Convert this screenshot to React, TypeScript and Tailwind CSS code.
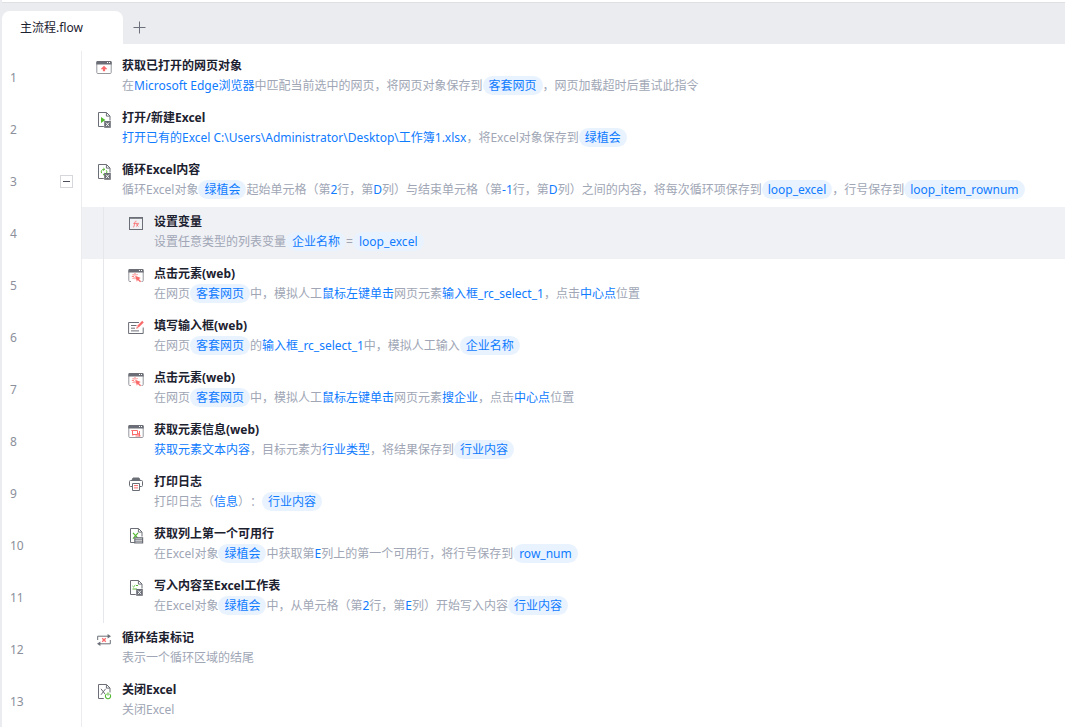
import type { ReactNode } from "react";

type Part = { k: "t" | "v" | "p"; s: string };
const t = (s: string): Part => ({ k: "t", s });
const v = (s: string): Part => ({ k: "v", s });
const p = (s: string): Part => ({ k: "p", s });

const GRAY = "#6b6e76";
const LIGHT = "#96989e";
const RED = "#fa6a6a";
const GREEN = "#52b832";

function Icon({ children }: { children: ReactNode }) {
  return (
    <svg viewBox="0 0 16 16" className="size-4 shrink-0" fill="none" stroke={GRAY} aria-hidden="true">
      {children}
    </svg>
  );
}

function TitleBar() {
  return (
    <>
      <path d="M0.3 4.6V2.2A1.2 1.2 0 0 1 1.5 1h13a1.2 1.2 0 0 1 1.2 1.2v2.4z" fill={GRAY} stroke="none" />
      <path d="M11 2h1v1h-1zM13 2h1v1h-1z" fill="#fff" stroke="none" />
    </>
  );
}

function Frame() {
  return (
    <>
      <rect x="0.8" y="1.5" width="14.4" height="12" rx="1" stroke={LIGHT} />
      <TitleBar />
    </>
  );
}

function Sheet() {
  return <path d="M7.8 14.5H2.5V0.5h8l3.5 3.5v4.5M10.4 0.7v3.4h3.4" />;
}

function Badge() {
  return (
    <>
      <rect x="8.2" y="9" width="6.6" height="6.8" fill={GRAY} stroke="none" />
      <path d="M10 10.6l3 3.6M13 10.6l-3 3.6" stroke="#fff" strokeWidth="0.9" />
    </>
  );
}

const icons = {
  page: (
    <Icon>
      <Frame />
      <path d="M8 5.8l3 2.9v.5H9.1v2H6.9v-2H5v-.5z" fill={RED} stroke="none" />
    </Icon>
  ),
  open: (
    <Icon>
      <Sheet />
      <path d="M5 5l4.4 3L5 11z" fill={GREEN} stroke="none" />
      <Badge />
    </Icon>
  ),
  loop: (
    <Icon>
      <Sheet />
      <path d="M5.6 9.2a2.6 2.6 0 0 1 2.6-3.9M10.3 6.3a2.6 2.6 0 0 1-2.4 4.2M7.3 4l1.5 1.3-1.5 1.3M8.6 9.2l-1.4 1.3 1.4 1.2" stroke={GREEN} />
      <Badge />
    </Icon>
  ),
  fx: (
    <Icon>
      <rect x="1.5" y="1.5" width="13" height="12" />
      <path d="M1 1h14v1.8H1z" fill={GRAY} stroke="none" />
      <path d="M8.5 5.2c-1-.3-1.5.4-1.7 1.4l-.7 3.4c-.2.8-.5 1.2-1.2 1M5.3 7.4h5.4M8.2 7.6c1 0 1.1 2.9 2.2 2.9M10.8 7.6c-1 0-1.6 2.9-2.8 2.9" stroke={RED} strokeWidth="0.8" />
    </Icon>
  ),
  click: (
    <Icon>
      <path d="M3 13.5H1.8a1 1 0 0 1-1-1V3.5M15.2 3.5v9a1 1 0 0 1-1 1h-.7" stroke={LIGHT} />
      <TitleBar />
      <path d="M7 5v2.2M3.8 8.4h2.2M4.6 6l1.6 1.6M9.5 6L8.2 7.4M4.6 11l1.5-1.6M7 9.6v1.6" stroke={RED} strokeWidth="0.9" />
      <path d="M7.2 7.8l5.6 2.2-1.9 1 2.2 2.3-1 1-2.3-2.2-.9 1.7z" fill={RED} stroke="none" />
    </Icon>
  ),
  input: (
    <Icon>
      <path d="M11 2.5H.6v11h14.6V7.5M3 5.5h5.5M3 8.2h4M3 10.9h8" />
      <path d="M15 1.6L9.8 6.8" stroke={RED} strokeWidth="2.2" />
      <path d="M8.2 8.8l.6-2.4 1.8 1.7z" fill={RED} stroke="none" />
    </Icon>
  ),
  info: (
    <Icon>
      <Frame />
      <path d="M4.5 6.5h5v4h-5zM11.5 7v5H7.5" stroke={RED} />
      <path d="M3.3 5.9h1.4v1.2H3.3zM9.5 9.2h1.6v1.6H9.5zM10.8 11h1.6v1.4h-1.6zM4 10.2h1.4v1.3H4z" fill={RED} stroke="none" />
    </Icon>
  ),
  print: (
    <Icon>
      <path d="M4 4.2L5 2h6l1 2.2z" fill={GRAY} />
      <path d="M4 10.5H2.5a1 1 0 0 1-1-1v-4a1 1 0 0 1 1-1h11a1 1 0 0 1 1 1v4a1 1 0 0 1-1 1H12" />
      <path d="M4.5 7.5h7v7h-7z" fill="#fff" />
      <path d="M6 9.6h4M6 11.9h4" stroke={RED} />
    </Icon>
  ),
  row: (
    <Icon>
      <Sheet />
      <path d="M5 4.8l4.6 5M10 4.8L5 10.6" stroke={GREEN} strokeWidth="1.2" />
      <path d="M6.2 9.2h9v6.3h-9z" fill={GRAY} stroke="none" />
      <path d="M7.4 10.8h6.6M7.4 12.4h6.6M7.4 14h6.6" stroke="#fff" strokeWidth="0.7" />
    </Icon>
  ),
  write: (
    <Icon>
      <Sheet />
      <path d="M4.5 6l1 .9 1.8-1.7M8 5.5h2M4.5 9h4.5" stroke={GREEN} />
      <Badge />
    </Icon>
  ),
  end: (
    <Icon>
      <path d="M1.7 8V4.2h11M14.3 8v3.8h-11" />
      <path d="M11.6 2L15 4.2l-3.4 2.2zM4.4 9.6L1 11.8 4.4 14z" fill={GRAY} stroke="none" />
      <path d="M6.2 6.2l3.6 3.6M9.8 6.2L6.2 9.8" stroke={RED} strokeWidth="1.3" />
    </Icon>
  ),
  close: (
    <Icon>
      <Sheet />
      <path d="M5 4.8l4.6 6M9.6 4.8L5 10.8" />
      <circle cx="12" cy="12" r="3.6" fill="#fff" stroke="none" />
      <path d="M10.6 9.9a2.6 2.6 0 1 0 2.8 0M12 8.6v3" stroke={GREEN} strokeWidth="1.1" />
    </Icon>
  ),
};

type Step = { icon: keyof typeof icons; title: string; parts: Part[]; nested?: boolean; selected?: boolean; open?: boolean };

const steps: Step[] = [
  { icon: "page", title: "获取已打开的网页对象", parts: [t("在"), v("Microsoft Edge浏览器"), t("中匹配当前选中的网页，将网页对象保存到"), p("客套网页"), t("，网页加载超时后重试此指令")] },
  { icon: "open", title: "打开/新建Excel", parts: [v("打开已有的Excel C:\\Users\\Administrator\\Desktop\\工作簿1.xlsx"), t("，将Excel对象保存到"), p("绿植会")] },
  { icon: "loop", title: "循环Excel内容", open: true, parts: [t("循环Excel对象"), p("绿植会"), t("起始单元格（第"), v("2"), t("行，第"), v("D"), t("列）与结束单元格（第"), v("-1"), t("行，第"), v("D"), t("列）之间的内容，将每次循环项保存到"), p("loop_excel"), t("，行号保存到"), p("loop_item_rownum")] },
  { icon: "fx", title: "设置变量", nested: true, selected: true, parts: [t("设置任意类型的列表变量"), p("企业名称"), t("="), p("loop_excel")] },
  { icon: "click", title: "点击元素(web)", nested: true, parts: [t("在网页"), p("客套网页"), t("中，模拟人工"), v("鼠标左键单击"), t("网页元素"), v("输入框_rc_select_1"), t("，点击"), v("中心点"), t("位置")] },
  { icon: "input", title: "填写输入框(web)", nested: true, parts: [t("在网页"), p("客套网页"), t("的"), v("输入框_rc_select_1"), t("中，模拟人工输入"), p("企业名称")] },
  { icon: "click", title: "点击元素(web)", nested: true, parts: [t("在网页"), p("客套网页"), t("中，模拟人工"), v("鼠标左键单击"), t("网页元素"), v("搜企业"), t("，点击"), v("中心点"), t("位置")] },
  { icon: "info", title: "获取元素信息(web)", nested: true, parts: [v("获取元素文本内容"), t("，目标元素为"), v("行业类型"), t("，将结果保存到"), p("行业内容")] },
  { icon: "print", title: "打印日志", nested: true, parts: [t("打印日志（"), v("信息"), t("）："), p("行业内容")] },
  { icon: "row", title: "获取列上第一个可用行", nested: true, parts: [t("在Excel对象"), p("绿植会"), t("中获取第"), v("E"), t("列上的第一个可用行，将行号保存到"), p("row_num")] },
  { icon: "write", title: "写入内容至Excel工作表", nested: true, parts: [t("在Excel对象"), p("绿植会"), t("中，从单元格（第"), v("2"), t("行，第"), v("E"), t("列）开始写入内容"), p("行业内容")] },
  { icon: "end", title: "循环结束标记", parts: [t("表示一个循环区域的结尾")] },
  { icon: "close", title: "关闭Excel", parts: [t("关闭Excel")] },
];

function Token({ part }: { part: Part }) {
  if (part.k === "p") return <span className="rounded-full bg-[#e9f3ff] px-1.5 text-[#0f7bff]">{part.s}</span>;
  if (part.k === "v") return <span className="text-[#0f7bff]">{part.s}</span>;
  return <span>{part.s}</span>;
}

function StepRow({ step, n }: { step: Step; n: number }) {
  return (
    <li className="flex h-13">
      <div className="flex w-20 shrink-0 items-center justify-between border-r border-[#ebecf0] px-2 text-[#8b909c]">
        <span className="pt-0.5">{n}</span>
        {step.open && (
          <button type="button" aria-label="折叠" className="flex size-[13px] items-center justify-center border border-[#d6d7db] bg-white">
            <span className="h-px w-[7px] bg-[#4b4f59]" />
          </button>
        )}
      </div>
      <div className={step.selected ? "flex min-w-0 grow bg-[#f0f1f5]" : "flex min-w-0 grow"}>
        {step.nested && <div className="ml-[21px] w-[11px] shrink-0 border-l border-[#e6e7eb]" />}
        <div className="flex gap-2.5 pt-[5px] pl-3.5">
          <div className="pt-1">{icons[step.icon]}</div>
          <div className="whitespace-nowrap">
            <h2 className="leading-5 font-bold text-[#1c2130]">{step.title}</h2>
            <p className="flex leading-[19px] text-[#a0a6b5] [text-spacing-trim:space-all]">
              {step.parts.map((part, i) => (
                <Token key={i} part={part} />
              ))}
            </p>
          </div>
        </div>
      </div>
    </li>
  );
}

export default function App() {
  return (
    <div className="flex min-h-screen flex-col overflow-hidden border-l-2 border-[#ebecf0] bg-white font-['Noto_Sans','Noto_Sans_CJK_SC',sans-serif] text-xs">
      <header className="mt-0.5 flex h-[42px] items-end border-t border-[#dfe0e4] bg-[#ebecf0]">
        <button type="button" className="h-[33px] w-[121px] rounded-t-lg bg-white pl-4.5 text-left text-[#1c2130]">
          主流程.flow
        </button>
        <button type="button" aria-label="新建" className="flex h-[33px] w-8 items-center justify-center text-[#6b707c]">
          <svg viewBox="0 0 13 13" className="size-[13px]" stroke="currentColor" aria-hidden="true">
            <path d="M6.5 0.5v12M0.5 6.5h12" />
          </svg>
        </button>
      </header>
      <main className="grow pt-[7px]">
        <ol>
          {steps.map((step, i) => (
            <StepRow key={i} step={step} n={i + 1} />
          ))}
        </ol>
      </main>
    </div>
  );
}
